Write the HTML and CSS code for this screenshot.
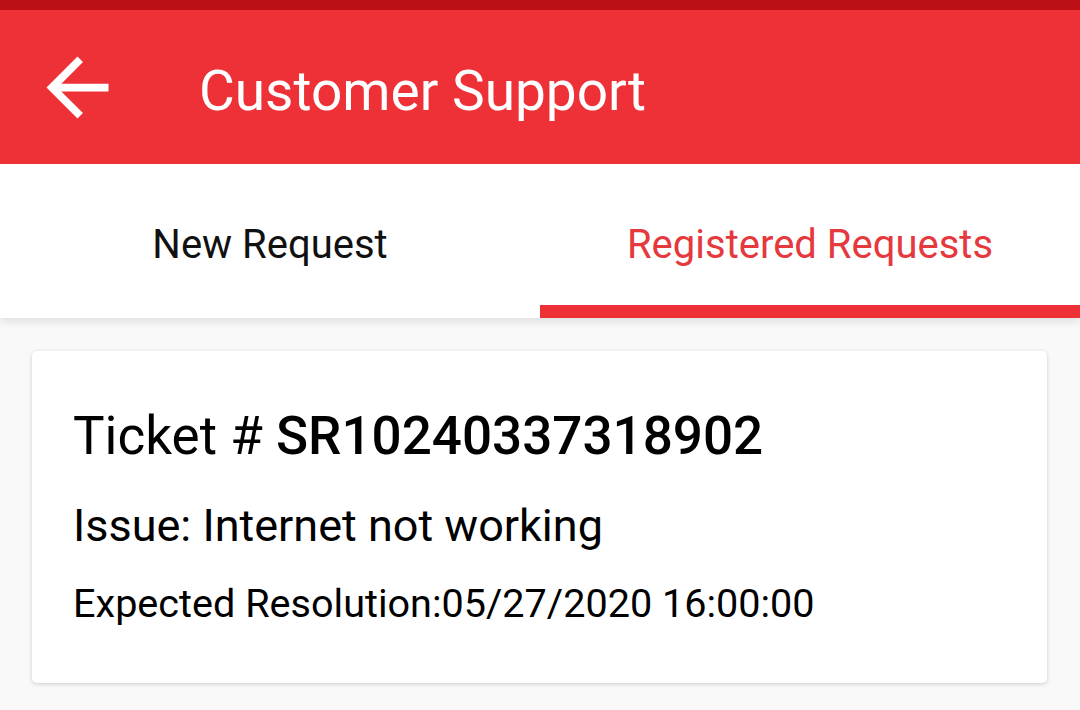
FILE: index.html
```html
<!DOCTYPE html>
<html>
<head>
<meta charset="utf-8">
<link rel="stylesheet" href="styles.css">
</head>
<body>
<div class="statusbar"></div>
<header class="appbar">
  <svg class="back" viewBox="0 0 24 24"><path d="M20 11H7.83l5.59-5.59L12 4l-8 8 8 8 1.41-1.41L7.83 13H20v-2z" fill="#fff"/></svg>
  <div class="title">Customer Support</div>
</header>
<nav class="tabs">
  <div class="tab">New Request</div>
  <div class="tab active">Registered Requests</div>
</nav>
<main class="content">
  <div class="card">
    <div class="ticket">Ticket # <b>SR10240337318902</b></div>
    <div class="issue">Issue: Internet not working</div>
    <div class="eta">Expected Resolution:05/27/2020 16:00:00</div>
  </div>
</main>
</body>
</html>
```
FILE: styles.css
```css
html, body {
  margin: 0;
  padding: 0;
  height: 100%;
}
body {
  font-family: Roboto, "Noto Sans", sans-serif;
  background: #f9f9f9;
  color: #000;
  overflow: hidden;
}
.statusbar {
  height: 10px;
  background: #bd1016;
}
.appbar {
  height: 154px;
  background: #ee3137;
  display: flex;
  align-items: center;
  color: #fff;
}
.back {
  width: 93px;
  height: 93px;
  margin-left: 31px;
  margin-top: 0;
}
.title {
  margin-left: 75px;
  font-size: 55px;
  margin-top: 8px;
}
.tabs {
  height: 154px;
  background: #fff;
  display: flex;
  position: relative;
  z-index: 1;
  box-shadow: 0 4px 8px rgba(0,0,0,0.10);
}
.tab {
  flex: 1;
  display: flex;
  align-items: center;
  justify-content: center;
  font-size: 40px;
  color: #111;
  padding-top: 6px;
  box-sizing: border-box;
}
.tab.active {
  color: #e5393e;
  border-bottom: 13px solid #ee3137;
  padding-top: 19px;
}
.content {
  padding: 33px 33px 0 32px;
}
.card {
  background: #fff;
  border-radius: 5px;
  box-shadow: 0 1px 4px rgba(0,0,0,0.18);
  height: 332px;
  box-sizing: border-box;
  padding: 55px 41px 0 41px;
}
.ticket {
  font-size: 53px;
  line-height: 60px;
}
.ticket b {
  font-weight: 500;
}
.issue {
  font-size: 45px;
  line-height: 52px;
  margin-top: 34px;
}
.eta {
  font-size: 39.6px;
  line-height: 44px;
  margin-top: 30px;
}
```
